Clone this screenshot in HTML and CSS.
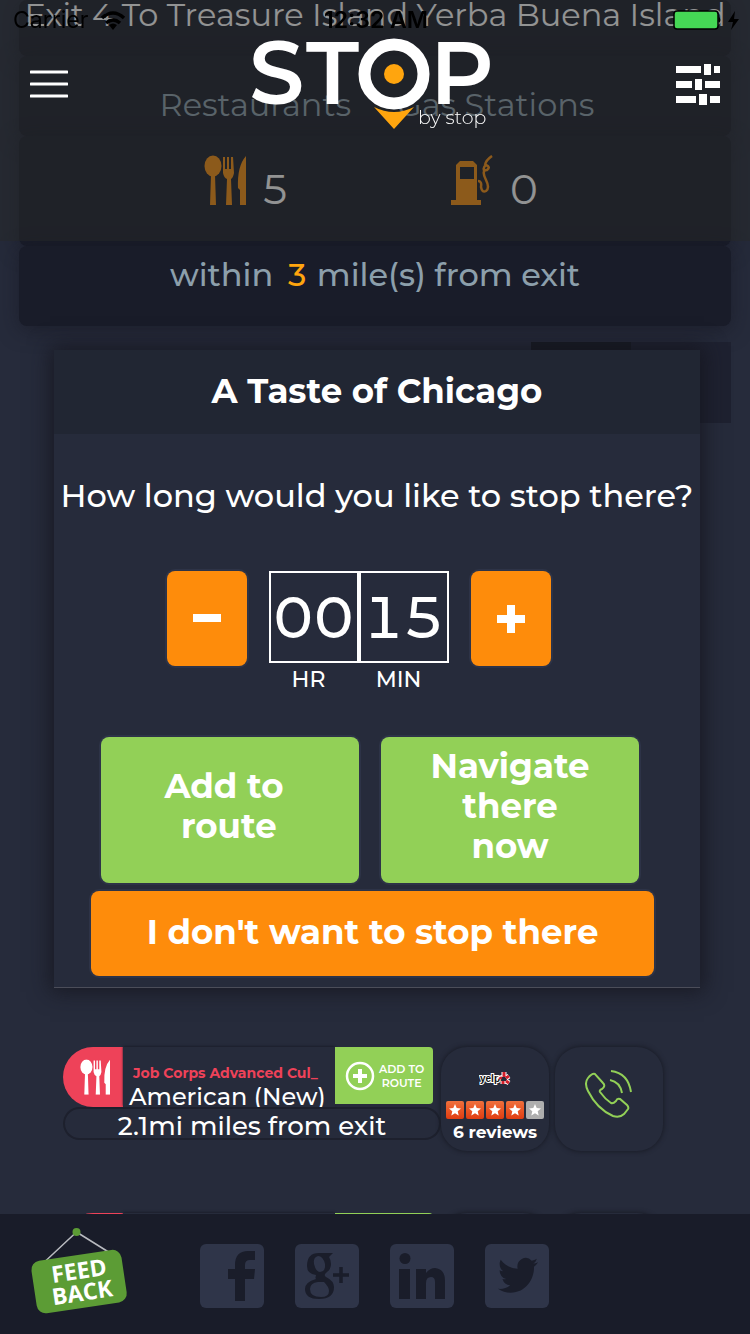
FILE: index.html
```html
<!DOCTYPE html>
<html lang="en">
<head>
<meta charset="utf-8">
<meta name="viewport" content="width=device-width, initial-scale=1">
<title>STOP by stop</title>
<link rel="stylesheet" href="styles.css">
</head>
<body>
<svg width="0" height="0" class="defs" aria-hidden="true">
  <symbol id="cutlery" viewBox="0 0 42 50">
    <ellipse cx="9" cy="11" rx="8.500" ry="10.500"/>
    <path d="M7 20h4l1 30H6z"/>
    <path d="M19 2h2v12h2V2h2v12h2V2h2l1 16q-1 5-3 6l1 26h-6l1-26q-3-1-4-6z"/>
    <path d="M42 1v49h-6V35l-2-2q-1-22 8-32z"/>
  </symbol>
</svg>

<main class="page">
  <section class="summary">
    <h1 class="panel panel-exit">Exit 4 To Treasure Island Yerba Buena Island</h1>
    <div class="panel panel-heads"><span>Restaurants</span><span>Gas Stations</span></div>
    <div class="panel panel-counts">
      <span class="count"><svg class="count-icon" viewBox="0 0 42 50"><use href="#cutlery"/></svg>5</span>
      <span class="count"><svg class="count-icon" viewBox="0 0 42 50"><path fill-rule="evenodd" d="M5 10l4-4h13l4 4v35h4v5H0v-5h5zM9 12v12h14V12z"/><path d="M27 26q4 0 3 6 1 6 5 4 4-3 0-11-5-10 1-10 4-3-1-5-4 3-1 7M34 10q1-5 7-9" fill="none" stroke="currentColor" stroke-width="2.500"/></svg>0</span>
    </div>
    <p class="panel panel-range">within <b>3</b> mile(s) from exit</p>
  </section>
  <div class="view-switch"><span class="on"></span><span></span></div>

  <ul class="results">
    <li class="result">
      <div class="result-main">
        <div class="result-top">
          <span class="kind"><svg viewBox="0 0 42 50"><use href="#cutlery"/></svg></span>
          <div class="result-info"><h2>Job Corps Advanced Cul_</h2><p>American (New)</p></div>
          <button class="add" type="button">
            <svg viewBox="0 0 30 32"><circle cx="15" cy="16" r="13" fill="none" stroke="#fff" stroke-width="2.500"/><path d="M15 9v14M8 16h14" stroke="#fff" stroke-width="4"/></svg>
            <span>ADD TO<br>ROUTE</span>
          </button>
        </div>
        <p class="distance">2.1mi miles from exit</p>
      </div>
      <a class="tile" href="#reviews">
        <svg class="yelp" viewBox="0 0 32 18"><text x="1" y="12" class="yelp-word">yelp</text><path d="M25 2v5M21 8l-1-2M27 8l3-2M27 11l3 2M24 11v3" stroke="#fff" stroke-width="5"/><path d="M25 2v5M22 9l-1-2M27 8l3-2M27 11l3 2M24 11v3" stroke="#d3202b" stroke-width="3"/></svg>
        <svg class="stars" viewBox="0 0 98 18">
          <defs><linearGradient id="fire" x2="0" y2="1"><stop stop-color="#f0703c"/><stop offset="1" stop-color="#e03c10"/></linearGradient>
          <path id="star" d="M9 3l1.700 4 4.300.4-3.300 2.800 1 4.300L9 12.200l-3.700 2.300 1-4.300L3 7.400 7.300 7z" fill="#fff"/></defs>
          <g fill="url(#fire)"><rect width="18" height="18" rx="2"/><rect x="20" width="18" height="18" rx="2"/><rect x="40" width="18" height="18" rx="2"/><rect x="60" width="18" height="18" rx="2"/></g><rect x="80" width="18" height="18" rx="2" fill="#aeaeae"/>
          <use href="#star"/><use href="#star" x="20"/><use href="#star" x="40"/><use href="#star" x="60"/><use href="#star" x="80"/>
        </svg>
        <span class="reviews">6 reviews</span>
      </a>
      <a class="tile tile-call" href="#call" aria-label="Call">
        <svg viewBox="0 0 48 48"><path d="M10 4q-3-1-7 4-4 5 0 13 9 18 25 25 7 2 11-2l4-5q1-2-1-4l-7-6q-3-1-4 2-3 3-5 2-6-4-11-11-1-2 2-3 4-3 1-6z"/><path d="M26 1q17 2 20 21M25 10q10 2 12 13"/></svg>
      </a>
    </li>
    <li class="result" aria-hidden="true">
      <div class="result-main"><div class="result-top"><span class="kind"></span><div class="result-info"></div><span class="add"></span></div></div>
      <span class="tile"></span><span class="tile"></span>
    </li>
  </ul>
</main>

<section class="dialog" role="dialog" aria-labelledby="place">
  <h2 class="dialog-title" id="place">A Taste of Chicago</h2>
  <form class="dialog-body">
    <p class="question">How long would you like to stop there?</p>
    <div class="stepper">
      <button class="btn step" type="button" aria-label="Less time"><svg viewBox="0 0 28 28"><path d="M0 9h28v8H0z"/></svg></button>
      <div class="time">
        <div class="unit"><input id="hr" value="00" inputmode="numeric"><label for="hr">HR</label></div>
        <div class="unit"><input id="min" value="15" inputmode="numeric"><label for="min">MIN</label></div>
      </div>
      <button class="btn step" type="button" aria-label="More time"><svg viewBox="0 0 28 28"><path d="M0 10h28v8H0zM10 0h8v28h-8z"/></svg></button>
    </div>
    <div class="choices">
      <button class="btn go go-add" type="button">Add to<br>&nbsp;route</button>
      <button class="btn go" type="button">Navigate<br>there<br>now</button>
    </div>
    <button class="btn decline" type="button">I don't want to stop there</button>
  </form>
</section>

<header class="topbar">
  <div class="status">
    <span class="carrier">Carrier <svg class="wifi" viewBox="0 0 26 19"><path d="M2 7q11-10 22 0M6 12q7-6 14 0" fill="none" stroke="#000" stroke-width="3.500"/><path d="M9 14q4-3 8 0l-4 5z"/></svg></span>
    <time>12:32 AM</time>
    <svg class="battery" viewBox="0 0 66 20"><rect x="1" y="1" width="44" height="18" rx="3" fill="#45d755" stroke="#000" stroke-width="1.500"/><path d="M46 7q3 3 0 6z"/><path d="M62 1L55 12h5l-2 8 8-11h-5z"/></svg>
  </div>
  <nav class="nav">
    <button class="icon-btn" type="button" aria-label="Menu"><svg class="menu" viewBox="0 0 38 28"><path d="M1 2h36M1 14h36M1 26h36" stroke="#fff" stroke-width="3" stroke-linecap="round"/></svg></button>
    <svg class="logo" viewBox="5 0 244 96" role="img" aria-label="STOP by stop">
      <g class="logo-word"><text x="1" y="68">S</text><text x="58" y="68">T</text><text x="182" y="68">P</text></g>
      <circle cx="146" cy="38" r="29.500" fill="none" stroke="#fff" stroke-width="12"/>
      <circle cx="146" cy="38" r="10" fill="#ffa50e"/>
      <path d="M126 71q20 10 40 0L146 93z" fill="#ffa50e"/>
      <text class="logo-sub" x="170" y="88">by stop</text>
    </svg>
    <button class="icon-btn" type="button" aria-label="Filters"><svg class="filters" viewBox="0 0 44 41"><path d="M0 2h25v7H0zM28 0h7v11h-7zM38 2h6v7h-6zM0 17h16v7H0zM19 15h7v11h-7zM29 17h15v7H29zM0 32h20v7H0zM23 30h8v11h-8zM34 32h10v7H34z"/></svg></button>
  </nav>
</header>

<footer class="footer">
  <a href="#feedback" class="feedback" aria-label="Feedback">
    <svg viewBox="0 0 98 88"><path d="M46 5L15 34M46 5l32 20" stroke="#b9bbc0" stroke-width="1.500"/><circle cx="46" cy="5" r="4" fill="#5c9c35"/>
      <g transform="rotate(-8.500 49 54)"><rect x="3" y="28" width="91" height="53" rx="9" fill="#5c9c35"/><text x="50" y="52">FEED</text><text x="50" y="74">BACK</text></g></svg>
  </a>
  <div class="social">
    <a href="#facebook" aria-label="Facebook"><svg viewBox="0 0 64 64"><path d="M35 57V35h-7V25h7v-4q0-14 13-14h7v9h-5q-5 0-5 5v4h10l-1 10h-9v22z"/></svg></a>
    <a href="#google" aria-label="Google Plus"><svg viewBox="0 0 64 64"><path fill-rule="evenodd" d="M24 9h14l-4 4q2 3 2 7 0 5-4 8-4 3-1 5 8 4 8 10 0 12-15 12-14 0-14-10 0-7 11-10-1-1 0-4-9-1-9-9Q12 9 24 9zm-1 3q-5 1-4 8 2 8 6 8 6-1 5-8-2-8-7-8zm0 26q-8 1-8 7 0 8 11 8 8 0 8-6 0-4-5-9z"/><path d="M46 23v16M38 31h16" stroke="#1a1d2a" stroke-width="3.500"/></svg></a>
    <a href="#linkedin" aria-label="LinkedIn"><svg viewBox="0 0 64 64"><circle cx="15" cy="14.500" r="5.500"/><path d="M9 25h11v30H9zM26 25h10v4q4-5 9-5 10 1 10 13v18H45V38q0-5-4-5-5 0-5 6v16H26z"/></svg></a>
    <a href="#twitter" aria-label="Twitter"><svg viewBox="0 0 64 64"><path transform="translate(13 10) scale(1.670 1.780)" d="M23.953 4.570a10 10 0 01-2.825.775 4.958 4.958 0 002.163-2.723c-.951.555-2.005.959-3.127 1.184a4.920 4.920 0 00-8.384 4.482C7.690 8.095 4.067 6.130 1.640 3.162a4.822 4.822 0 00-.666 2.475c0 1.710.870 3.213 2.188 4.096a4.904 4.904 0 01-2.228-.616v.060a4.923 4.923 0 003.946 4.827 4.996 4.996 0 01-2.212.085 4.936 4.936 0 004.604 3.417 9.867 9.867 0 01-6.102 2.105c-.390 0-.779-.023-1.170-.067a13.995 13.995 0 007.557 2.209c9.053 0 13.998-7.496 13.998-13.985 0-.210 0-.420-.015-.630A9.935 9.935 0 0024 4.590z"/></svg></a>
  </div>
</footer>
</body>
</html>
```

FILE: styles.css
```css
* { box-sizing: border-box; }

body {
  margin: 0;
  height: 100vh;
  overflow: hidden;
  background: #262b3b;
  color: #fff;
  font-family: "Montserrat", "Inter", "Open Sans", sans-serif;
  font-size: 32px;
  line-height: 40px;
}

h1, h2, p, ul { margin: 0; padding: 0; font-weight: 400; }
button, input { font: inherit; color: inherit; }
button { padding: 0; border: 0; background: none; }
a { color: inherit; text-decoration: none; }
svg { display: block; }
.defs { position: absolute; }

/* Exit summary */
.summary { margin: 0 19px; text-align: center; }
.panel {
  background: #191c29;
  border-radius: 8px;
  box-shadow: 0 4px 20px rgba(20, 20, 30, .5);
  font-size: 32px;
}
.panel-exit { padding-bottom: 26px; line-height: 30px; white-space: nowrap; }
.panel-heads { display: flex; justify-content: center; gap: 46px; height: 80px; padding: 29px 0 11px 4px; color: #8c9fab; }
.panel-counts { display: flex; align-items: flex-start; justify-content: center; gap: 164px; height: 110px; padding: 19px 8px 0 0; }
.count { display: flex; gap: 17px; align-items: flex-end; font-size: 42px; line-height: 32px; }
.count-icon { width: 42px; height: 50px; fill: #f28c0f; color: #f28c0f; }
.panel-range { padding: 9px 0 31px; color: #8c9fab; font-weight: 500; }
.panel-range b { margin: 0 2px 0 6px; font-weight: 500; color: #ffa50e; }

.view-switch { display: flex; width: 200px; height: 81px; margin: 16px 19px 0 auto; background: #1e2130; }
.view-switch span { flex: 1; }
.view-switch .on { background: #171a23; }

/* Results */
.results { margin-top: 624px; padding: 0 87px 0 63px; list-style: none; }
.result { display: flex; gap: 6px; height: 104px; margin-bottom: 62px; }
.result-main { flex: 1; min-width: 0; margin-right: -6px; }
.result-top { display: flex; align-items: flex-start; height: 60px; padding-right: 8px; }
.kind { display: grid; place-items: center; width: 60px; height: 60px; padding-left: 4px; border-radius: 30px 0 0 30px; background: #ee4259; }
.kind svg { width: 30px; height: 40px; fill: #fff; }
.result-info { flex: 1; min-width: 0; height: 60px; padding: 16px 0 0 6px; overflow: hidden; white-space: nowrap; box-shadow: 0 -1px 2px #1b1e2b; }
.result-info h2 { padding-left: 4px; color: #ee4259; font-size: 14px; font-weight: 700; line-height: 20px; }
.result-info p { font-size: 24px; font-weight: 500; line-height: 28px; }
.add { display: flex; align-items: center; gap: 4px; width: 98px; height: 57px; padding-left: 10px; border-radius: 0 4px 4px 0; background: #92d057; font-size: 11px; font-weight: 600; line-height: 14px; }
.add svg { width: 30px; height: 32px; flex: none; }
.distance { height: 33px; border-radius: 18px; box-shadow: 0 0 0 2px #1d202d inset; text-align: center; font-size: 26px; font-weight: 500; line-height: 38px; }
.tile { display: flex; flex-direction: column; align-items: center; width: 108px; height: 104px; padding-top: 23px; border-radius: 26px; background: #262b3b; box-shadow: 0 0 4px 1px #1a1d28; }
.yelp { width: 32px; height: 18px; }
.yelp-word { font: 700 10px "Liberation Sans", sans-serif; fill: #111; stroke: #fff; stroke-width: 2px; paint-order: stroke; }
.stars { width: 98px; height: 18px; margin-top: 13px; }
.reviews { font-size: 17px; font-weight: 700; line-height: 26px; }
.tile-call svg { width: 48px; height: 48px; fill: none; stroke: #92d057; stroke-width: 2px; }

/* Stop dialog */
.dialog {
  position: absolute;
  top: 350px;
  left: 54px;
  right: 50px;
  background: #262b3b;
  border-bottom: 1px solid #4b4d59;
  box-shadow: 0 0 20px 4px rgba(20, 20, 28, .75);
  text-align: center;
}
.dialog-title { padding: 21px 0 23px; background: #212633; font-size: 34px; font-weight: 700; }
.dialog-body { padding: 42px 46px 11px 37px; }
.question { margin: 0 -46px 0 -37px; font-weight: 500; white-space: nowrap; }
.stepper { display: flex; justify-content: center; gap: 22px; margin: 55px 28px 44px 0; }
.time { display: flex; }
.unit { display: flex; flex-direction: column; width: 90px; }
.unit input { width: 100%; height: 92px; padding: 0; border: 2px solid #fff; border-radius: 0; background: none; text-align: center; font-size: 58px; font-weight: 500; font-variant-numeric: tabular-nums; }
.unit label { padding: 3px 10px 0 0; font-size: 22px; font-weight: 500; line-height: 27px; }
.btn { border-radius: 8px; box-shadow: 0 0 0 2px #2d3347; font-size: 34px; font-weight: 700; }
.step { display: grid; place-items: center; width: 80px; height: 95px; background: #fe8c0b; }
.step svg { width: 28px; height: 28px; fill: #fff; }
.choices { display: grid; grid-template-columns: 1fr 1fr; gap: 22px; margin: 0 15px 8px 10px; }
.go { height: 146px; padding-bottom: 8px; background: #92d057; }
.go-add { padding-right: 12px; }
.decline { display: block; width: 100%; height: 85px; padding-bottom: 4px; background: #fe8c0b; }

/* Top bar */
.topbar { position: fixed; inset: 0 0 auto; height: 241px; background: rgba(38, 40, 40, .5); }
.status { display: grid; grid-template-columns: 1fr auto 1fr; align-items: center; height: 40px; padding: 0 11px 0 13px; color: #000; font-family: "Inter", sans-serif; font-size: 23px; }
.status time { font-weight: 600; }
.carrier { display: flex; align-items: center; gap: 12px; }
.wifi { width: 26px; height: 19px; }
.battery { width: 66px; height: 20px; justify-self: end; }
.nav { display: flex; align-items: flex-start; justify-content: space-between; padding: 0 30px; }
.icon-btn { flex: 1; display: flex; padding-top: 24px; }
.icon-btn:last-child { justify-content: flex-end; }
.menu { width: 38px; height: 40px; }
.filters { width: 44px; height: 41px; fill: #fff; }
.logo { width: 244px; height: 96px; margin-top: -4px; fill: #fff; overflow: visible; }
.logo-word { font-size: 88px; font-weight: 600; }
.logo-sub { font-size: 19px; font-weight: 300; }

/* Footer */
.footer { position: fixed; inset: auto 0 0; display: flex; align-items: flex-start; gap: 71px; height: 120px; padding: 13px 30px 0; background: #191c29; }
.feedback svg { width: 99px; height: 88px; }
.feedback text { font: 700 23px "Open Sans", sans-serif; fill: #fff; text-anchor: middle; }
.social { display: flex; gap: 31px; padding-top: 17px; }
.social svg { width: 64px; height: 64px; border-radius: 6px; background: #2f3549; fill: #1a1d2a; }
```
